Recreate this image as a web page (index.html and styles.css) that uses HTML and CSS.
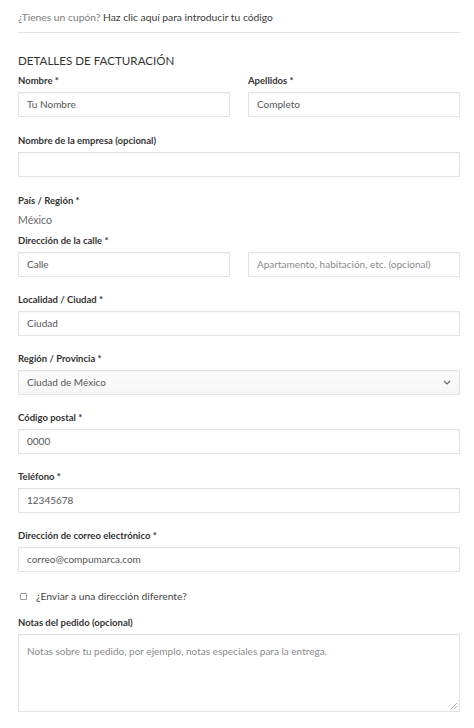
FILE: index.html
```html
<!DOCTYPE html>
<html lang="es">
<head>
<meta charset="utf-8">
<title>Checkout</title>
<link rel="stylesheet" href="styles.css">
</head>
<body>
<div class="page">
  <p class="coupon"><span class="muted">¿Tienes un cupón?</span> <a href="#" class="coupon-link">Haz clic aquí para introducir tu código</a></p>
  <h3 class="heading">DETALLES DE FACTURACIÓN</h3>

  <div class="row two first">
    <div class="field">
      <label class="label">Nombre *</label>
      <div class="input">Tu Nombre</div>
    </div>
    <div class="field">
      <label class="label">Apellidos *</label>
      <div class="input">Completo</div>
    </div>
  </div>

  <div class="row wide-gap">
    <label class="label">Nombre de la empresa (opcional)</label>
    <div class="input"></div>
  </div>

  <div class="row wide-gap country">
    <label class="label">País / Región *</label>
    <div class="static">México</div>
  </div>

  <div class="row after-country">
    <label class="label">Dirección de la calle *</label>
    <div class="two">
      <div class="input">Calle</div>
      <div class="input placeholder">Apartamento, habitación, etc. (opcional)</div>
    </div>
  </div>

  <div class="row">
    <label class="label">Localidad / Ciudad *</label>
    <div class="input">Ciudad</div>
  </div>

  <div class="row">
    <label class="label">Región / Provincia *</label>
    <div class="input select">
      <span>Ciudad de México</span>
      <svg class="chev" width="8" height="5" viewBox="0 0 8 5"><path d="M1 1l3 3 3-3" fill="none" stroke="#666" stroke-width="1.1"/></svg>
    </div>
  </div>

  <div class="row">
    <label class="label">Código postal *</label>
    <div class="input">0000</div>
  </div>

  <div class="row">
    <label class="label">Teléfono *</label>
    <div class="input">12345678</div>
  </div>

  <div class="row">
    <label class="label">Dirección de correo electrónico *</label>
    <div class="input">correo@compumarca.com</div>
  </div>

  <div class="check-row">
    <span class="box"></span>
    <span class="check-text">¿Enviar a una dirección diferente?</span>
  </div>

  <div class="row notes">
    <label class="label">Notas del pedido (opcional)</label>
    <div class="input textarea placeholder">Notas sobre tu pedido, por ejemplo, notas especiales para la entrega.
      <svg class="grip" width="8" height="8" viewBox="0 0 8 8"><path d="M7 1L1 7M7 4L4 7" stroke="#999" stroke-width="0.8"/></svg>
    </div>
  </div>
</div>
</body>
</html>
```

FILE: styles.css
```css
* { box-sizing: border-box; }
html, body { margin: 0; padding: 0; background: #fff; }
body {
  font-family: Lato, "Open Sans", "Liberation Sans", sans-serif;
  color: #444;
}
.page {
  width: 442px;
  margin-left: 18px;
  padding-top: 10px;
}
.coupon {
  margin: 0;
  font-size: 10.3px;
  line-height: 14px;
  padding-bottom: 8px;
  border-bottom: 1px solid #e2e2e2;
}
.muted { color: #7a7a7a; }
.coupon-link { color: #3a3a3a; text-decoration: none; }
.heading {
  margin: 19px 0 0;
  font-size: 11.6px;
  line-height: 18px;
  font-weight: 400;
  color: #333;
}
.row { margin-top: 17px; }
.row.first { margin-top: 5px; }
.row.wide-gap { margin-top: 18px; }
.row.after-country { margin-top: 7px; }
.row.two, .two {
  display: grid;
  grid-template-columns: 1fr 1fr;
  column-gap: 18px;
}
.label {
  display: block;
  font-size: 9.5px;
  line-height: 12px;
  font-weight: 700;
  color: #333;
  margin-bottom: 5px;
}
.input {
  height: 25px;
  border: 1px solid #e3e3e3;
  box-shadow: inset 0 1px 2px rgba(0,0,0,0.04);
  background: #fff;
  font-size: 10px;
  line-height: 23px;
  color: #555;
  padding: 0 8px;
  white-space: nowrap;
  overflow: hidden;
}
.placeholder { color: #8a8a8a; }
.country .label { margin-bottom: 5px; }
.static {
  font-size: 10.6px;
  line-height: 16px;
  color: #666;
}
.select {
  display: flex;
  align-items: center;
  justify-content: space-between;
  background: linear-gradient(#fcfcfc, #f6f6f6);
  padding-right: 8px;
}
.chev { display: block; }
.check-row {
  display: flex;
  align-items: center;
  margin-top: 17px;
  height: 14px;
}
.box {
  width: 7px;
  height: 7px;
  border: 1px solid #999;
  border-radius: 1px;
  margin-left: 2px;
  margin-right: 9px;
}
.check-text {
  font-size: 10.3px;
  line-height: 14px;
  color: #444;
}
.row.notes { margin-top: 14px; }
.textarea {
  position: relative;
  height: 78px;
  line-height: 16px;
  padding-top: 8px;
  white-space: normal;
}
.grip {
  position: absolute;
  right: 1px;
  bottom: 1px;
}
```
